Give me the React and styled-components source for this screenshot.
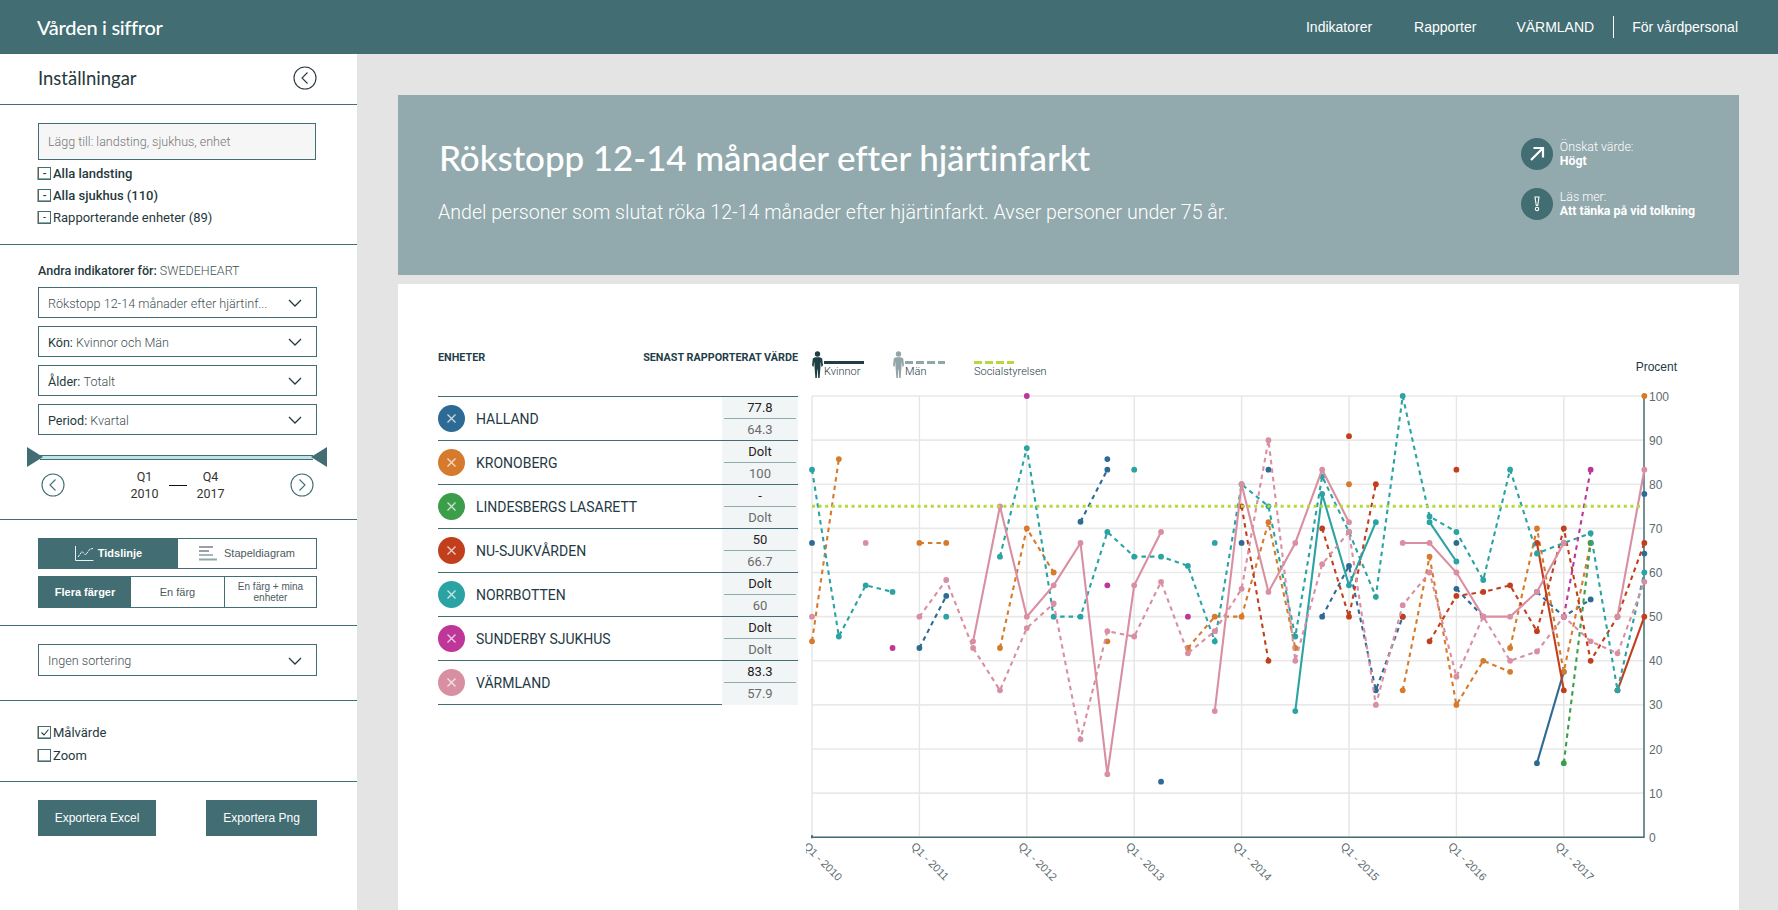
import React from "react";
import styled, { createGlobalStyle } from "styled-components";

const TEAL = "#416D73";
const INK = "#26393D";
const BRAND = "Lato, 'Open Sans', sans-serif";

const GlobalStyle = createGlobalStyle`
  * { box-sizing: border-box; }
  html, body { margin: 0; height: 100%; overflow: hidden; background: #e4e4e4; }
  body { font-family: Roboto, sans-serif; color: ${INK}; }
`;

const Page = styled.div`
  width: 1778px;
  height: 910px;
  display: flex;
  flex-direction: column;
  overflow: hidden;
`;

const Header = styled.header`
  height: 54px;
  flex: none;
  background: ${TEAL};
  color: #fff;
  display: flex;
  align-items: center;
  justify-content: space-between;
  padding: 0 40px 0 37px;
`;

const Logo = styled.div`
  font-family: ${BRAND};
  font-size: 20px;
  font-weight: 500;
  letter-spacing: -0.3px;
`;

const Nav = styled.nav`
  display: flex;
  align-items: center;
  font-family: "Liberation Sans", Arial, sans-serif;
  font-size: 14px;
`;

const NavLink = styled.a`
  margin-left: ${props => props.$gap ?? 42}px;
`;

const NavDivider = styled.span`
  width: 1px;
  height: 22px;
  background: #fff;
  margin: 0 18px 0 19px;
`;

const Body = styled.div`
  flex: 1;
  display: flex;
  min-height: 0;
`;

const Sidebar = styled.aside`
  width: 357px;
  flex: none;
  background: #fff;
`;

const Section = styled.section`
  height: ${props => props.$height}px;
  padding: ${props => props.$top || 0}px 40px 0 38px;
  border-bottom: ${props => (props.$last ? "none" : `1px solid ${TEAL}`)};
`;

const SideHead = styled(Section)`
  display: flex;
  align-items: center;
  justify-content: space-between;
  padding-bottom: 3px;
`;

const SideTitle = styled.h2`
  margin: 0;
  font-family: ${BRAND};
  font-size: 18.5px;
  font-weight: 400;
  color: ${INK};
`;

const SearchBox = styled.div`
  height: 37px;
  width: 278px;
  border: 1px solid ${TEAL};
  background: #f6f6f6;
  display: flex;
  align-items: center;
  padding-left: 9px;
  font-size: 12.5px;
  font-weight: 300;
  color: #777;
`;

const CheckList = styled.div`
  margin-top: ${props => props.$top || 0}px;
`;

const CheckRow = styled.label`
  height: ${props => props.$height || 22}px;
  display: flex;
  align-items: center;
  gap: 2px;
  font-size: 13px;
  font-weight: ${props => props.$weight || 500};
  color: ${INK};
`;

const Box = styled.span`
  width: 13px;
  height: 13px;
  flex: none;
  border: 1px solid ${TEAL};
  box-shadow: inset 0 -1px 0 #8fa6aa, -1px 0 0 #b9a78f;
  display: flex;
  align-items: center;
  justify-content: center;
  font-size: 11px;
  line-height: 1;
  color: ${INK};
`;

const IndicatorLabel = styled.div`
  height: 16px;
  line-height: 17px;
  font-size: 12.5px;
  font-weight: 500;
  margin-bottom: 9px;
  white-space: nowrap;
`;

const Light = styled.span`
  font-weight: 300;
  color: #3f5054;
`;

const SelectStack = styled.div`
  display: flex;
  flex-direction: column;
  gap: 8px;
`;

const SelectBox = styled.div`
  height: ${props => props.$height || 31}px;
  width: 279px;
  border: 1px solid ${TEAL};
  display: flex;
  align-items: center;
  justify-content: space-between;
  padding: 1px 14px 0 9px;
  font-size: 12.6px;
  font-weight: 400;
  color: ${INK};
`;

const SliderWrap = styled.div`
  position: relative;
  height: 20px;
  margin: 12px -4px 0 2px;
  display: flex;
  align-items: center;
`;

const SliderTrack = styled.div`
  height: 5px;
  width: 273px;
  background: #bfe3e6;
  border-top: 1px solid ${TEAL};
  border-bottom: 1px solid ${TEAL};
`;

const Thumb = styled.span`
  position: absolute;
  top: 0;
  ${props => (props.$right ? "right: -6px;" : "left: -13px;")}
  width: 0;
  height: 0;
  border-top: 10px solid transparent;
  border-bottom: 10px solid transparent;
  ${props => (props.$right ? `border-right: 16px solid ${TEAL};` : `border-left: 16px solid ${TEAL};`)}
`;

const PeriodRow = styled.div`
  display: flex;
  align-items: center;
  justify-content: space-between;
  padding: 0 3px;
  height: 32px;
  margin-top: 2px;
`;

const PeriodRange = styled.div`
  display: flex;
  align-items: center;
  gap: 4px;
`;

const PeriodValue = styled.div`
  width: 40px;
  text-align: center;
  font-size: 12.5px;
  line-height: 17px;
  color: #333;
`;

const PeriodDash = styled.span`
  width: 18px;
  height: 1px;
  background: #111;
`;

const TabRow = styled.div`
  display: grid;
  grid-template-columns: ${props => props.$cols};
  width: 279px;
  height: ${props => props.$height}px;
  margin-bottom: 7px;
  border: 1px solid ${TEAL};
`;

const Tab = styled.div`
  display: flex;
  align-items: center;
  justify-content: center;
  gap: ${props => props.$gap || 0}px;
  text-align: center;
  background: ${props => (props.$active ? TEAL : "#fff")};
  color: ${props => (props.$active ? "#fff" : "#4c5b5e")};
  font-family: "Liberation Sans", Arial, sans-serif;
  font-size: ${props => props.$size || 11}px;
  line-height: 11px;
  font-weight: ${props => (props.$active ? 700 : 400)};
  border-left: ${props => (props.$divider ? `1px solid ${TEAL}` : "none")};
`;

const ExportRow = styled.div`
  display: flex;
  justify-content: space-between;
  width: 279px;
`;

const ExportButton = styled.button`
  width: ${props => props.$width}px;
  height: 36px;
  border: 0;
  background: ${TEAL};
  color: #fff;
  font-family: "Liberation Sans", Arial, sans-serif;
  font-size: 12px;
`;

const Main = styled.main`
  flex: 1;
  min-width: 0;
  padding: 41px 39px 0 41px;
  display: flex;
  flex-direction: column;
`;

const Banner = styled.div`
  height: 180px;
  flex: none;
  background: #92a9ad;
  color: #fff;
  display: flex;
  justify-content: space-between;
  padding: 43px 44px 0 41px;
  margin-bottom: 9px;
`;

const BannerTitle = styled.h1`
  margin: 0;
  font-family: ${BRAND};
  font-size: 35px;
  line-height: 38px;
  font-weight: 500;
  letter-spacing: -0.1px;
`;

const BannerText = styled.p`
  margin: 25px 0 0 -1px;
  font-size: 19.6px;
  line-height: 24px;
  font-weight: 300;
`;

const InfoList = styled.div`
  display: flex;
  flex-direction: column;
  gap: 18px;
`;

const InfoItem = styled.div`
  display: flex;
  align-items: center;
  gap: 7px;
  font-size: 12.4px;
  line-height: 14px;
`;

const InfoIcon = styled.span`
  width: 32px;
  height: 32px;
  border-radius: 50%;
  background: ${TEAL};
  display: flex;
  align-items: center;
  justify-content: center;
  color: #fff;
`;

const InfoLabel = styled.div`
  font-weight: 300;
`;

const InfoValue = styled.div`
  font-weight: 700;
`;

const Card = styled.div`
  flex: 1;
  background: #fff;
  display: flex;
  padding: 65px 0 0 40px;
  min-height: 0;
`;

const TableCol = styled.div`
  width: 360px;
  flex: none;
`;

const TableHead = styled.div`
  height: 47px;
  padding-top: 2px;
  display: flex;
  justify-content: space-between;
  font-size: 10.8px;
  line-height: 14px;
  font-weight: 700;
  color: #1f4049;
`;

const Row = styled.div`
  height: 44px;
  display: flex;
  border-top: 1px solid ${TEAL};
  &:last-child {
    height: 45px;
  }
`;

const RowName = styled.div`
  flex: 1;
  display: flex;
  align-items: center;
  gap: 11px;
  font-size: 14px;
  color: #1f3a44;
  ${Row}:last-child & {
    border-bottom: 1px solid ${TEAL};
  }
`;

const RemoveDot = styled.span`
  width: 27px;
  height: 27px;
  border-radius: 50%;
  background: ${props => props.$color};
  display: flex;
  align-items: center;
  justify-content: center;
`;

const ValueCell = styled.div`
  width: 76px;
  background: #f2f5f6;
  padding: 0 2px;
  display: flex;
  flex-direction: column;
  text-align: center;
  font-size: 13px;
`;

const ValueTop = styled.div`
  height: 22px;
  line-height: 22px;
  color: #222;
  border-bottom: 1px solid #8fa9ad;
`;

const ValueBottom = styled.div`
  height: 21px;
  line-height: 21px;
  color: #6a6a6a;
`;

const ChartCol = styled.div`
  width: 890px;
  margin-left: 8px;
  flex: none;
`;

const Legend = styled.div`
  height: 41px;
  display: flex;
  gap: 29px;
  padding: 2px 19px 0 6px;
`;

const LegendItem = styled.div`
  display: flex;
  gap: 1px;
`;

const LegendKey = styled.div`
  width: 40px;
  padding-top: 10px;
`;

const Swatch = styled.div`
  height: 3px;
  background: ${props =>
    props.$dashed
      ? `repeating-linear-gradient(90deg, ${props.$color} 0 8px, transparent 8px 11px)`
      : props.$color};
`;

const LegendText = styled.div`
  font-size: 11px;
  line-height: 12px;
  font-weight: 300;
  margin-top: 2px;
  white-space: nowrap;
  color: #26393d;
`;

const Procent = styled.div`
  margin-left: auto;
  font-family: "Liberation Sans", Arial, sans-serif;
  font-size: 12px;
  line-height: 14px;
  color: #1f3a44;
  padding-top: 9px;
`;

const ChartSvg = styled.svg`
  display: block;
`;

const AxisText = styled.text`
  font-family: "Liberation Sans", Arial, sans-serif;
  font-size: ${props => props.$size || 12}px;
  fill: ${props => props.$fill || "#5d6b70"};
`;

const Chevron = () => (
  <svg width="14" height="8" viewBox="0 0 14 8" fill="none" stroke={INK} strokeWidth="1.3">
    <polyline points="1,1 7,7 13,1" />
  </svg>
);

const RoundArrow = ({ dir = "left", color = INK }) => (
  <svg width="24" height="24" viewBox="0 0 24 24" fill="none" stroke={color} strokeWidth="1.1">
    <circle cx="12" cy="12" r="11" stroke={color === INK ? INK : TEAL} />
    <polyline points={dir === "left" ? "14.5,6.5 9,12 14.5,17.5" : "9.5,6.5 15,12 9.5,17.5"} />
  </svg>
);

const Person = ({ color }) => (
  <svg width="11" height="27" viewBox="0 0 11 27" fill={color}>
    <circle cx="5.5" cy="3" r="2.7" />
    <path d="M3 6.2h5l2.2 1.2.8 7.2-1.6 1.4-.7-5.6-.3 6.4-.8 10.6H6.2l-.5-9h-.4l-.5 9H3.400l-.8-10.600-.3-6.400-.7 5.600L0 14.600l.8-7.200z" />
  </svg>
);

const CheckMark = () => (
  <svg width="10" height="9" viewBox="0 0 10 9" fill="none" stroke={INK} strokeWidth="1.1">
    <polyline points="1.500,4.500 4,7 8.500,1.500" />
  </svg>
);

const LineIcon = () => (
  <svg width="19" height="15" viewBox="0 0 19 15" fill="none" stroke="#fff" strokeWidth="0.9">
    <polyline points="0.500,0 0.500,14.500 18.500,14.500" />
    <polyline points="3,11 7,5.500 10.500,9 15,3 18,2.500" strokeDasharray="2.500 0.800" />
  </svg>
);

const BarsIcon = () => (
  <svg width="19" height="15" viewBox="0 0 19 15" fill="none" strokeWidth="1.2">
    <path d="M0 1h14M0 5h10" stroke="#33474b" />
    <path d="M0 9h14" stroke="#6d8489" />
    <path d="M0 13.500h18" stroke="#8fa6aa" strokeWidth="2" />
  </svg>
);

const Cross = () => (
  <svg width="11" height="11" viewBox="0 0 11 11" stroke="#fff" strokeOpacity="0.75" strokeWidth="1.3">
    <path d="M1.500 1.500l8 8M9.500 1.500l-8 8" />
  </svg>
);

const UpArrow = () => (
  <svg width="16" height="16" viewBox="0 0 16 16" fill="none" stroke="#fff" strokeWidth="2.200">
    <path d="M2 14L14 2M4.500 2H14v9.500" />
  </svg>
);

const Bang = () => (
  <svg width="8" height="16" viewBox="0 0 8 16" fill="none" stroke="#fff" strokeWidth="1.100">
    <path d="M2 1h4L4.700 9.500H3.300z" />
    <circle cx="4" cy="13" r="1.700" />
  </svg>
);

const C = {
  blue: "#2D6A94",
  orange: "#D67B2D",
  green: "#3C9E4A",
  red: "#C23F1E",
  teal: "#2BA3A3",
  magenta: "#BE3697",
  pink: "#D98FA2",
};

const UNITS = [
  { name: "HALLAND", color: C.blue, top: "77.8", bottom: "64.3" },
  { name: "KRONOBERG", color: C.orange, top: "Dolt", bottom: "100" },
  { name: "LINDESBERGS LASARETT", color: C.green, top: "-", bottom: "Dolt" },
  { name: "NU-SJUKVÅRDEN", color: C.red, top: "50", bottom: "66.7" },
  { name: "NORRBOTTEN", color: C.teal, top: "Dolt", bottom: "60" },
  { name: "SUNDERBY SJUKHUS", color: C.magenta, top: "Dolt", bottom: "Dolt" },
  { name: "VÄRMLAND", color: C.pink, top: "83.3", bottom: "57.9" },
];

// each run: colour, dashed (men) or solid (women), then [quarter index, value] pairs
const RUNS = [
  [C.blue, 0, [[0, 66.7]]],
  [C.blue, 1, [[4, 42.9], [5, 54.7]]],
  [C.blue, 1, [[10, 71.5], [11, 83.3]]],
  [C.blue, 0, [[11, 85.7]]],
  [C.blue, 0, [[13, 12.6]]],
  [C.blue, 0, [[16, 66.7]]],
  [C.blue, 0, [[17, 83.3]]],
  [C.blue, 1, [[19, 50], [20, 61.5], [21, 33.3], [22, 50]]],
  [C.blue, 0, [[24, 66.7]]],
  [C.blue, 1, [[24, 56.3], [25, 50]]],
  [C.blue, 1, [[27, 55.6], [28, 50], [29, 53.9]]],
  [C.blue, 0, [[27, 16.8], [28, 37.5]]],
  [C.blue, 0, [[31, 77.8]]],
  [C.blue, 0, [[31, 64.3]]],

  [C.orange, 1, [[0, 44.4], [1, 85.7]]],
  [C.orange, 1, [[4, 66.7], [5, 66.7]]],
  [C.orange, 1, [[7, 42.9], [8, 70], [9, 60]]],
  [C.orange, 0, [[11, 44.4]]],
  [C.orange, 1, [[14, 42.9], [15, 50], [16, 50], [17, 71.4], [18, 42.9]]],
  [C.orange, 0, [[20, 80]]],
  [C.orange, 1, [[22, 33.3], [23, 63.6], [24, 30], [25, 40], [26, 37.5]]],
  [C.orange, 1, [[26, 42.9], [27, 70], [28, 37.5], [29, 66.7]]],
  [C.orange, 0, [[31, 100]]],

  [C.green, 1, [[28, 16.8], [29, 66.7]]],

  [C.red, 1, [[16, 75], [17, 40]]],
  [C.red, 1, [[19, 70], [20, 50], [21, 80]]],
  [C.red, 0, [[20, 90.9]]],
  [C.red, 0, [[22, 50]]],
  [C.red, 1, [[23, 44.4], [24, 54.7], [25, 55.6], [26, 57.1], [27, 46.7], [28, 70], [29, 40], [30, 50], [31, 66.7]]],
  [C.red, 0, [[24, 83.3]]],
  [C.red, 0, [[27, 66.7], [28, 33.3]]],
  [C.red, 0, [[30, 33.3], [31, 50]]],

  [C.teal, 1, [[0, 83.3], [1, 45.5], [2, 57.1], [3, 55.6]]],
  [C.teal, 0, [[5, 50]]],
  [C.teal, 1, [[7, 63.6], [8, 88.2], [9, 50], [10, 50], [11, 69.2], [12, 63.6], [13, 63.6], [14, 61.5], [15, 44.4], [16, 80], [17, 75], [18, 45.5], [19, 81.8], [20, 69.2], [21, 54.5], [22, 100], [23, 72.7], [24, 69.2], [25, 58.3], [26, 83.3], [27, 64.3], [28, 66.7], [29, 68.9], [30, 33.3], [31, 60]]],
  [C.teal, 0, [[12, 83.3]]],
  [C.teal, 0, [[15, 66.7]]],
  [C.teal, 0, [[18, 28.6], [19, 77.8], [20, 57.1], [21, 71.4]]],
  [C.teal, 0, [[23, 71.4], [24, 62.5]]],

  [C.magenta, 0, [[3, 42.9]]],
  [C.magenta, 0, [[8, 100]]],
  [C.magenta, 0, [[11, 57.1]]],
  [C.magenta, 0, [[14, 50]]],
  [C.magenta, 1, [[28, 50], [29, 83.3]]],

  [C.pink, 0, [[0, 50]]],
  [C.pink, 0, [[2, 66.7]]],
  [C.pink, 1, [[4, 50], [5, 58.3], [6, 42.9], [7, 33.3], [8, 47.4], [9, 53], [10, 22.2], [11, 46.7], [12, 45.5], [13, 57.9], [14, 41.7], [15, 46.7], [16, 56.3], [17, 90], [18, 40], [19, 61.9], [20, 69.2], [21, 30], [22, 52.6], [23, 60], [24, 36.4], [25, 50], [26, 40], [27, 42.1], [28, 50], [29, 44.4], [30, 41.7], [31, 57.9]]],
  [C.pink, 0, [[6, 44.4], [7, 75], [8, 50], [9, 57.1], [10, 66.7], [11, 14.3], [12, 57.1], [13, 69.2]]],
  [C.pink, 0, [[15, 28.6], [16, 80], [17, 55.6], [18, 66.7], [19, 83.3], [20, 71.4]]],
  [C.pink, 0, [[22, 66.7], [23, 66.7], [24, 60], [25, 50], [26, 50], [27, 55.6], [28, 66.7]]],
  [C.pink, 0, [[30, 50], [31, 83.3]]],
];

const px = i => 812 + 26.85 * i;
const py = v => 837.3 - 4.413 * v;
const YEARS = [2010, 2011, 2012, 2013, 2014, 2015, 2016, 2017];
const TICKS = [0, 10, 20, 30, 40, 50, 60, 70, 80, 90, 100];

const Chart = () => (
  <ChartSvg width="890" height="500" viewBox="806 390 890 500">
    {TICKS.map(t => (
      <line key={t} x1="812" x2="1644" y1={py(t)} y2={py(t)} stroke="#e9e9e9" strokeWidth="1.6" />
    ))}
    {YEARS.map((y, n) => (
      <line key={y} x1={px(n * 4)} x2={px(n * 4)} y1={py(100)} y2={py(0)} stroke="#e6e6e6" strokeWidth="1.4" />
    ))}
    <polyline points={`812,${py(0)} 1644,${py(0)} 1644,${py(100)}`} fill="none" stroke={TEAL} strokeWidth="1.5" />
    <line x1="812" x2="812" y1={py(0) - 2} y2={py(0) + 1} stroke={TEAL} strokeWidth="2" />
    {TICKS.map(t => (
      <AxisText key={t} x="1649" y={py(t) + 4.5}>{t}</AxisText>
    ))}
    {YEARS.map((y, n) => (
      <AxisText key={y} $size={11} x={px(n * 4) - 9} y={847} transform={`rotate(45 ${px(n * 4) - 9} 847)`}>
        {`Q1 - ${y}`}
      </AxisText>
    ))}
    {RUNS.map(([color, dashed, pts], k) => (
      <g key={k}>
        {pts.length > 1 && (
          <polyline
            points={pts.map(([i, v]) => `${px(i)},${py(v)}`).join(" ")}
            fill="none"
            stroke={color}
            strokeWidth="2.1"
            strokeDasharray={dashed ? "4.5 4" : undefined}
          />
        )}
        {pts.map(([i, v]) => (
          <circle key={i} cx={px(i)} cy={py(v)} r="2.9" fill={color} />
        ))}
      </g>
    ))}
    <line x1="812" x2="1641" y1={py(75)} y2={py(75)} stroke="#B5D93F" strokeWidth="3" strokeDasharray="3 3.600" />
  </ChartSvg>
);

const Check = ({ mark, label, weight, height }) => (
  <CheckRow $weight={weight} $height={height}>
    <Box>{mark}</Box>
    {label}
  </CheckRow>
);

const Select = ({ label, value, height }) => (
  <SelectBox $height={height}>
    <span>
      {label && `${label} `}
      <Light>{value}</Light>
    </span>
    <Chevron />
  </SelectBox>
);

export default function App() {
  return (
    <Page>
      <GlobalStyle />
      <Header>
        <Logo>Vården i siffror</Logo>
        <Nav>
          <NavLink>Indikatorer</NavLink>
          <NavLink>Rapporter</NavLink>
          <NavLink $gap={40}>VÄRMLAND</NavLink>
          <NavDivider />
          <NavLink $gap={0}>För vårdpersonal</NavLink>
        </Nav>
      </Header>
      <Body>
        <Sidebar>
          <SideHead $height={51}>
            <SideTitle>Inställningar</SideTitle>
            <RoundArrow />
          </SideHead>
          <Section $height={140} $top={18}>
            <SearchBox>Lägg till: landsting, sjukhus, enhet</SearchBox>
            <CheckList $top={2}>
              <Check mark="-" label="Alla landsting" />
              <Check mark="-" label="Alla sjukhus (110)" />
              <Check mark="-" label="Rapporterande enheter (89)" weight={400} />
            </CheckList>
          </Section>
          <Section $height={275} $top={17}>
            <IndicatorLabel>
              Andra indikatorer för: <Light>SWEDEHEART</Light>
            </IndicatorLabel>
            <SelectStack>
              <Select value="Rökstopp 12-14 månader efter hjärtinf..." />
              <Select label="Kön:" value="Kvinnor och Män" />
              <Select label="Ålder:" value="Totalt" />
              <Select label="Period:" value="Kvartal" />
            </SelectStack>
            <SliderWrap>
              <Thumb />
              <SliderTrack />
              <Thumb $right />
            </SliderWrap>
            <PeriodRow>
              <RoundArrow color={TEAL} />
              <PeriodRange>
                <PeriodValue>Q1<br />2010</PeriodValue>
                <PeriodDash />
                <PeriodValue>Q4<br />2017</PeriodValue>
              </PeriodRange>
              <RoundArrow dir="right" color={TEAL} />
            </PeriodRow>
          </Section>
          <Section $height={106} $top={18}>
            <TabRow $cols="139px 1fr" $height={31}>
              <Tab $active $gap={4}><LineIcon />Tidslinje</Tab>
              <Tab $gap={6}><BarsIcon />Stapeldiagram</Tab>
            </TabRow>
            <TabRow $cols="92px 93px 1fr" $height={32}>
              <Tab $active>Flera färger</Tab>
              <Tab>En färg</Tab>
              <Tab $divider $size={10}>En färg + mina<br />enheter</Tab>
            </TabRow>
          </Section>
          <Section $height={75} $top={18}>
            <Select value="Ingen sortering" height={32} />
          </Section>
          <Section $height={81} $top={20}>
            <Check mark={<CheckMark />} label="Målvärde" weight={400} height={23} />
            <Check label="Zoom" weight={400} height={23} />
          </Section>
          <Section $height={100} $top={18} $last>
            <ExportRow>
              <ExportButton $width={118}>Exportera Excel</ExportButton>
              <ExportButton $width={111}>Exportera Png</ExportButton>
            </ExportRow>
          </Section>
        </Sidebar>
        <Main>
          <Banner>
            <div>
              <BannerTitle>Rökstopp 12-14 månader efter hjärtinfarkt</BannerTitle>
              <BannerText>Andel personer som slutat röka 12-14 månader efter hjärtinfarkt. Avser personer under 75 år.</BannerText>
            </div>
            <InfoList>
              <InfoItem>
                <InfoIcon><UpArrow /></InfoIcon>
                <div>
                  <InfoLabel>Önskat värde:</InfoLabel>
                  <InfoValue>Högt</InfoValue>
                </div>
              </InfoItem>
              <InfoItem>
                <InfoIcon><Bang /></InfoIcon>
                <div>
                  <InfoLabel>Läs mer:</InfoLabel>
                  <InfoValue>Att tänka på vid tolkning</InfoValue>
                </div>
              </InfoItem>
            </InfoList>
          </Banner>
          <Card>
            <TableCol>
              <TableHead>
                <span>ENHETER</span>
                <span>SENAST RAPPORTERAT VÄRDE</span>
              </TableHead>
              {UNITS.map(u => (
                <Row key={u.name}>
                  <RowName>
                    <RemoveDot $color={u.color}><Cross /></RemoveDot>
                    {u.name}
                  </RowName>
                  <ValueCell>
                    <ValueTop>{u.top}</ValueTop>
                    <ValueBottom>{u.bottom}</ValueBottom>
                  </ValueCell>
                </Row>
              ))}
            </TableCol>
            <ChartCol>
              <Legend>
                <LegendItem>
                  <Person color="#1f3f45" />
                  <LegendKey>
                    <Swatch $color="#1f3f45" />
                    <LegendText>Kvinnor</LegendText>
                  </LegendKey>
                </LegendItem>
                <LegendItem>
                  <Person color="#92a5a8" />
                  <LegendKey>
                    <Swatch $dashed $color="#92a5a8" />
                    <LegendText>Män</LegendText>
                  </LegendKey>
                </LegendItem>
                <LegendItem>
                  <LegendKey>
                    <Swatch $dashed $color="#B5D93F" />
                    <LegendText>Socialstyrelsen</LegendText>
                  </LegendKey>
                </LegendItem>
                <Procent>Procent</Procent>
              </Legend>
              <Chart />
            </ChartCol>
          </Card>
        </Main>
      </Body>
    </Page>
  );
}
